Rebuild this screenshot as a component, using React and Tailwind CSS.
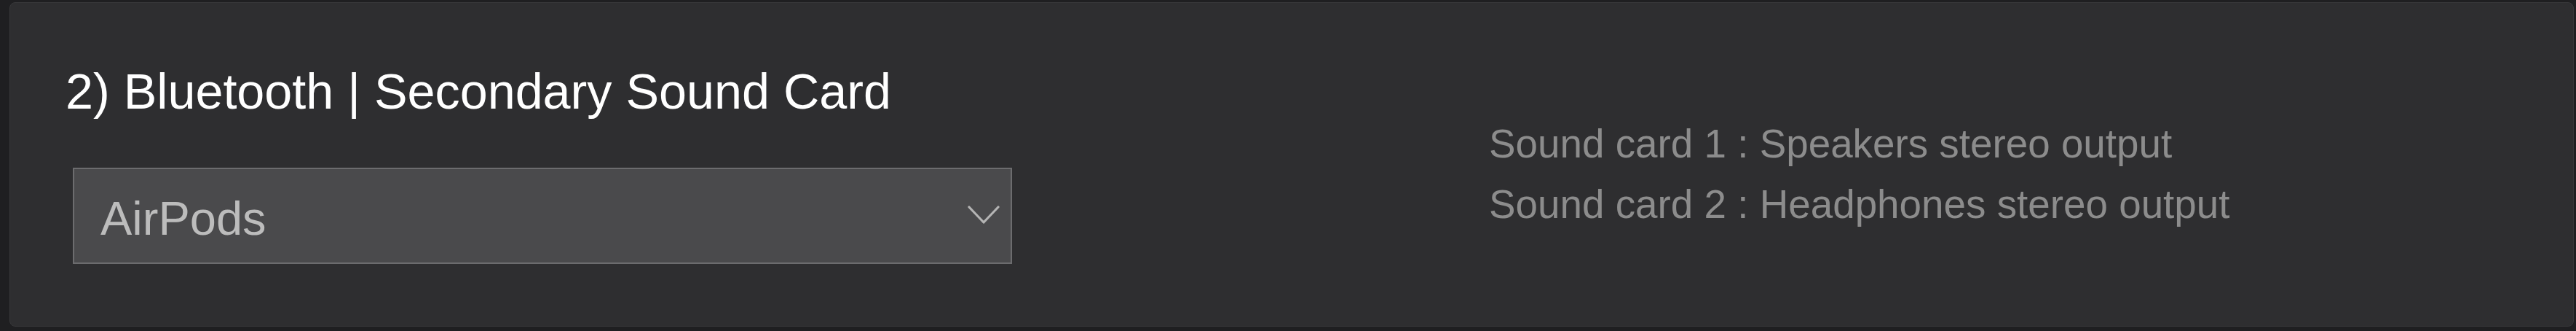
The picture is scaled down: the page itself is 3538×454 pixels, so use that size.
export default function App() {
  return (
    <div
      className="w-[3538px] h-[454px] bg-[#1f1f21] pl-[13px] pr-[3px] pt-[3px] pb-[6px]"
      style={{ fontFamily: '"Liberation Sans", Arial, sans-serif' }}
    >
      <div className="h-full rounded-[8px] border border-[#38383a] bg-[#2e2e30] flex items-start pl-[76px] pt-[87px]">
        <div className="flex flex-col w-[1300px]">
          <h2 className="text-[68.3px] leading-none text-white font-normal">
            2) Bluetooth | Secondary Sound Card
          </h2>
          <div className="ml-[10px] mt-[71px] w-[1290px] h-[132px] border-2 border-[#6c6c6e] bg-[#4a4a4c] flex items-center justify-between pl-[36px] pr-[15px] pt-[7px]">
            <span className="text-[65px] leading-none text-[#bcbcbc]">AirPods</span>
            <svg width="44" height="26" viewBox="0 0 44 26" className="-mt-[10px]">
              <path d="M2 2 L22 23 L42 2" fill="none" stroke="#b4b4b4" strokeWidth="3.2" strokeLinecap="round" strokeLinejoin="round" />
            </svg>
          </div>
        </div>
        <div className="ml-[655px] mt-[65px] flex flex-col text-[54.8px] leading-[83px] text-[#8c8c8c]">
          <span>Sound card 1 : Speakers stereo output</span>
          <span>Sound card 2 : Headphones stereo output</span>
        </div>
      </div>
    </div>
  );
}
